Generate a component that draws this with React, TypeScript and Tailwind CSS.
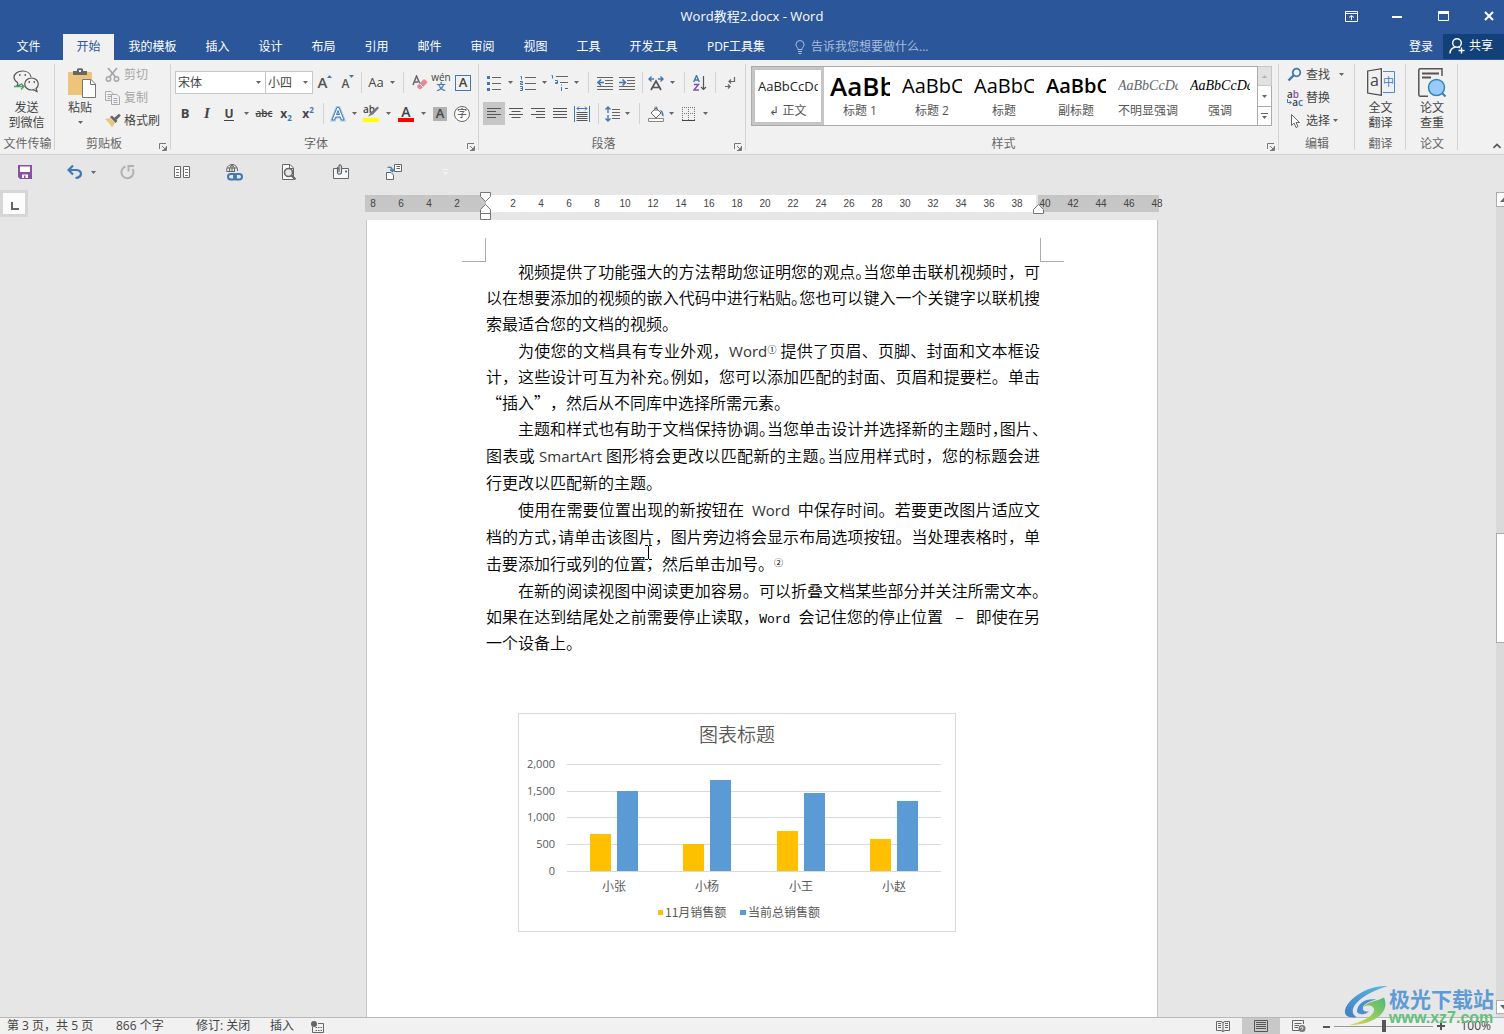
import type { ReactNode } from "react";

const UI_FONT = "font-['Open_Sans','Noto_Sans_CJK_SC',sans-serif]";

/* ---------- small shared pieces ---------- */

const Icon = ({ w = 16, h = 16, children }: { w?: number; h?: number; children: ReactNode }) => (
  <svg width={w} height={h} viewBox={`0 0 ${w} ${h}`} fill="none" className="shrink-0" aria-hidden="true">
    {children}
  </svg>
);

const Caret = () => (
  <Icon w={5} h={3}>
    <path d="M0 0H5L2.500 3Z" fill="#666" />
  </Icon>
);

const Tool = ({ label, className = "w-[22px]", children }: { label: string; className?: string; children: ReactNode }) => (
  <button type="button" aria-label={label} className={`flex h-[23px] shrink-0 items-center justify-center ${className}`}>
    {children}
  </button>
);

const Sep = ({ className = "w-2" }: { className?: string }) => (
  <div className={`flex h-[21px] shrink-0 justify-center ${className}`}>
    <div className="w-px bg-[#d2d2d2]" />
  </div>
);

const Launcher = () => (
  <button type="button" aria-label="更多选项" className="absolute right-[4px] bottom-[3px]">
    <Icon w={8} h={8}>
      <path d="M.5 6V.5H7M3 3L6 6M7.5 3V7.5H3" stroke="#777" />
      <path d="M7 4V7H4Z" fill="#777" />
    </Icon>
  </button>
);

const Group = ({ title, className, launcher, children }: { title: string; className: string; launcher?: boolean; children: ReactNode }) => (
  <section aria-label={title} className={`relative flex shrink-0 flex-col ${className}`}>
    <div className="h-[75px]">{children}</div>
    <div className="text-center text-xs leading-[18px] text-[#666]">{title}</div>
    {launcher && <Launcher />}
    <div className="absolute top-1 right-0 h-[86px] w-px bg-[#d2d2d2]" />
  </section>
);

/* ---------- title bar and tabs ---------- */

const TitleBar = () => (
  <div className="grid h-[34px] grid-cols-[1fr_auto_1fr] items-center overflow-hidden">
    <div />
    <h1 className="text-[13px] text-white">Word教程2.docx - Word</h1>
    <div className="-mr-2 flex justify-end pb-[2px]">
      <Tool label="功能区显示选项" className="w-[46px]">
        <Icon w={13} h={11}>
          <path d="M.5 .5H12.500V10.500H.5ZM.5 2.500H12.500M6.500 9V5M4 6.500L6.500 4.500L9 6.500" stroke="#fff" />
        </Icon>
      </Tool>
      <Tool label="最小化" className="w-[46px]">
        <Icon w={10} h={4}>
          <path d="M0 3H10" stroke="#fff" strokeWidth="2" />
        </Icon>
      </Tool>
      <Tool label="最大化" className="w-[46px]">
        <Icon w={11} h={10}>
          <path d="M.5 .5H10.5V9.500H.5Z" stroke="#fff" />
          <path d="M0 1.5H11" stroke="#fff" strokeWidth="3" />
        </Icon>
      </Tool>
      <Tool label="关闭" className="w-[46px]">
        <Icon w={10} h={10}>
          <path d="M1 1L9 9M9 1L1 9" stroke="#fff" strokeWidth="2" />
        </Icon>
      </Tool>
    </div>
  </div>
);

const tabs = [
  { name: "文件", cls: "w-[57px] mr-[6px]" },
  { name: "开始", cls: "w-[51px] bg-[#f1f1f1] text-[#2b579a]" },
  { name: "我的模板", cls: "w-[77px]" },
  { name: "插入", cls: "w-[53px]" },
  { name: "设计", cls: "w-[53px]" },
  { name: "布局", cls: "w-[53px]" },
  { name: "引用", cls: "w-[53px]" },
  { name: "邮件", cls: "w-[53px]" },
  { name: "审阅", cls: "w-[53px]" },
  { name: "视图", cls: "w-[53px]" },
  { name: "工具", cls: "w-[53px]" },
  { name: "开发工具", cls: "w-[77px]" },
  { name: "PDF工具集", cls: "w-[88px]" },
];

const TabBar = () => (
  <nav className="flex h-[26px] text-xs text-white">
    {tabs.map((t) => (
      <button key={t.name} type="button" className={`shrink-0 pb-px text-center whitespace-nowrap ${t.cls}`}>
        {t.name}
      </button>
    ))}
    <label className="ml-[15px] flex items-center gap-[6px]">
      <Icon w={10} h={14}>
        <path d="M3 9.500C3 7.500 1 7 1 4.500A4 4 0 0 1 9 4.500C9 7 7 7.500 7 9.500ZM3 11.500H7M3.500 13.500H6.500" stroke="#a9bcd8" />
      </Icon>
      <input
        type="text"
        aria-label="操作说明搜索"
        placeholder="告诉我您想要做什么..."
        className="w-[160px] bg-transparent outline-none placeholder:text-[#a9bcd8]"
      />
    </label>
    <button type="button" className="ml-auto px-[10px] pb-px">
      登录
    </button>
    <button type="button" className="mb-px flex w-[61px] items-center gap-1 bg-[#124078] pb-[2px] pl-[6px]">
      <Icon>
        <circle cx="8" cy="5" r="4.300" stroke="#fff" strokeWidth="1.400" />
        <path d="M1 15.500C1 11 4 9.500 6.500 9M9.500 9L11 10M12.500 9.500V15.500M9.500 12.500H15.500" stroke="#fff" strokeWidth="1.400" />
      </Icon>
      共享
    </button>
  </nav>
);

/* ---------- ribbon groups ---------- */

const WechatGroup = () => (
  <Group title="文件传输" className="w-[55px]">
    <button type="button" className="flex w-[53px] flex-col items-center pt-[10px] text-xs leading-[15px]">
      <Icon w={28} h={24}>
        <path d="M5 13C2 11 1 9 1 7.500C1 3.500 5 1 9.500 1C14 1 17.500 3.500 18 7M5 13L4 16L8 14.500" stroke="#555" strokeWidth="1.200" />
        <ellipse cx="18.500" cy="14" rx="6.800" ry="6" fill="#f1f1f1" stroke="#555" strokeWidth="1.200" />
        <path d="M20 19.500L24 21.500L23 18" fill="#f1f1f1" stroke="#555" strokeWidth="1.200" />
        <path d="M6 5H7.500M11.500 5H13M15.500 12H17M20.500 12H22" stroke="#444" strokeWidth="1.600" />
        <path d="M1 16.500H11M8 13.500L11 16.500L8 19.500" stroke="#4aa564" strokeWidth="1.400" />
      </Icon>
      <span className="mt-[6px]">发送</span>
      <span>到微信</span>
    </button>
  </Group>
);

const ClipboardGroup = () => (
  <Group title="剪贴板" className="w-[116px] [&>div:nth-child(2)]:pr-[18px]" launcher>
    <div className="flex text-xs">
      <button type="button" className="flex w-[50px] flex-col items-center pt-2 leading-[15px]">
        <span className="ml-1">
          <Icon w={28} h={30}>
            <path d="M0 4H24V27H0Z" fill="#ecc47b" />
            <path d="M5 3H9V1C9 0 15 0 15 1V3H19V7H5Z" fill="#666" />
            <path d="M11 2H13V4H11Z" fill="#f1f1f1" />
            <path d="M14.500 11.500H23L27.500 16V29.500H14.500Z" fill="#fff" stroke="#777" />
            <path d="M22.500 11.500V16.500H27.500" stroke="#777" />
          </Icon>
        </span>
        <span className="mt-[2px]">粘贴</span>
        <span className="mt-[6px]">
          <Caret />
        </span>
      </button>
      <div className="flex flex-col pt-[3px]">
        <button type="button" className="flex h-[23px] items-center gap-[3px] text-[#a6a6a6]">
          <Icon>
            <path d="M3 1L10.500 10M12 1L4.500 10" stroke="#a6a6a6" strokeWidth="1.800" />
            <circle cx="3.500" cy="12" r="2.200" stroke="#a6a6a6" strokeWidth="1.500" />
            <circle cx="11.500" cy="12" r="2.200" stroke="#a6a6a6" strokeWidth="1.500" />
          </Icon>
          剪切
        </button>
        <button type="button" className="flex h-[23px] items-center gap-[3px] text-[#a6a6a6]">
          <Icon>
            <path d="M.5 1.500H6L8.500 4V10.500H.5ZM2.500 4.500H6M2.500 6.500H6M2.500 8.500H5" stroke="#a8a8b0" />
            <path d="M6.500 4.500H12L14.500 7V14.500H6.500Z" fill="#f1f1f1" stroke="#a8a8b0" />
            <path d="M8.500 8.500H12.500M8.500 10.500H12.500M8.500 12.500H12.500" stroke="#a8a8b0" />
          </Icon>
          复制
        </button>
        <button type="button" className="flex h-[23px] items-center gap-[3px]">
          <Icon>
            <path d="M0 6L5 5L10 10L7 14.500C5 11 3 9 0 6Z" fill="#ecc47b" />
            <path d="M5 4L7 2.500L12.500 8L10.500 10Z" fill="#666" />
            <path d="M9 5L14 .8L15.800 2.500L11.500 7Z" fill="#666" />
          </Icon>
          格式刷
        </button>
      </div>
    </div>
  </Group>
);

const SelectBox = ({ label, value, options, className }: { label: string; value: string; options: string[]; className: string }) => (
  <div className={`grid h-[23px] shrink-0 items-center border border-[#c6c6c6] bg-white ${className}`}>
    <select aria-label={label} defaultValue={value} className="col-start-1 row-start-1 h-full w-full appearance-none pl-[2px] text-xs outline-none">
      {options.map((o) => (
        <option key={o}>{o}</option>
      ))}
    </select>
    <span className="pointer-events-none col-start-1 row-start-1 mr-1 justify-self-end">
      <Caret />
    </span>
  </div>
);

const FontGroup = () => (
  <Group title="字体" className="w-[308px] [&>div:nth-child(2)]:pr-[18px]" launcher>
    <div className="flex flex-col gap-2 pt-[11px] pl-1">
      <div className="flex items-center">
        <SelectBox label="字体" value="宋体" options={["宋体", "黑体", "楷体"]} className="w-[91px]" />
        <SelectBox label="字号" value="小四" options={["小四", "四号", "五号"]} className="-ml-px w-[48px]" />
        <Tool label="增大字号" className="w-6">
          <span className="text-[15px] font-semibold text-[#555]">A</span>
          <span className="mb-3">
            <Icon w={5} h={3}>
              <path d="M0 3H5L2.500 0Z" fill="#3f78b5" />
            </Icon>
          </span>
        </Tool>
        <Tool label="减小字号">
          <span className="mt-[3px] text-[12px] font-semibold text-[#555]">A</span>
          <span className="mb-3">
            <Icon w={5} h={3}>
              <path d="M0 0H5L2.500 3Z" fill="#3f78b5" />
            </Icon>
          </span>
        </Tool>
        <Sep className="w-1" />
        <Tool label="更改大小写" className="w-[26px]">
          <span className="text-[13px] text-[#444]">Aa</span>
        </Tool>
        <Tool label="大小写选项" className="w-[6px]">
          <Caret />
        </Tool>
        <Sep className="w-4" />
        <Tool label="清除格式" className="w-[18px]">
          <Icon>
            <path d="M1 10L4.500 1L8 9M2 7H6" stroke="#666" strokeWidth="1.500" />
            <path d="M5.500 10.500L11.500 4.500Q12.500 4 13.500 5L15 6.500Q15.500 7.500 15 8L9 14Q8 14.500 7 14L5.500 12.500Q5 11.500 5.500 10.500Z" fill="#e8879a" />
            <path d="M7.500 8.500L11.500 12.500" stroke="#f1f1f1" />
          </Icon>
        </Tool>
        <Tool label="拼音指南" className="w-6 flex-col pb-px">
          <span className="text-[10px] leading-[8px] text-[#444]">wén</span>
          <span className="text-[9px] leading-[11px] font-bold text-[#3f78b5]">文</span>
        </Tool>
        <Tool label="字符边框" className="w-5">
          <span className="flex size-4 items-center justify-center border border-[#3f78b5] text-[13px] font-semibold text-[#444]">A</span>
        </Tool>
      </div>
      <div className="-ml-px flex items-center text-[13px] text-[#444]">
        <Tool label="加粗">
          <b>B</b>
        </Tool>
        <Tool label="倾斜">
          <i className="font-['Liberation_Serif',serif] text-[15px] font-bold">I</i>
        </Tool>
        <Tool label="下划线">
          <span className="border-b border-[#444] text-[12px] leading-[13px] font-bold">U</span>
        </Tool>
        <Tool label="下划线选项" className="w-[13px]">
          <Caret />
        </Tool>
        <Tool label="删除线">
          <s className="text-[10px] font-semibold">abc</s>
        </Tool>
        <Tool label="下标">
          <b className="text-xs">x</b>
          <span className="mt-2 text-[8px] font-bold text-[#3f78b5]">2</span>
        </Tool>
        <Tool label="上标">
          <b className="text-xs">x</b>
          <span className="mb-2 text-[8px] font-bold text-[#3f78b5]">2</span>
        </Tool>
        <Sep />
        <Tool label="文本效果">
          <Icon>
            <path d="M2 14L7 1.500H9L14 14H11.500L10.300 11H5.700L4.500 14ZM6.500 8.500H9.500L8 4.500Z" fill="#fff" stroke="#a9cbeb" strokeWidth="3" />
            <path d="M2 14L7 1.500H9L14 14H11.500L10.300 11H5.700L4.500 14ZM6.500 8.500H9.500L8 4.500Z" fill="#fff" stroke="#3f78b5" />
          </Icon>
        </Tool>
        <Tool label="文本效果选项" className="w-[10px]">
          <Caret />
        </Tool>
        <Tool label="突出显示" className="w-6">
          <span className="grid">
            <span className="col-start-1 row-start-1 text-left text-[10px] leading-[9px] font-semibold">ab</span>
            <span className="col-start-1 row-start-1">
              <Icon w={16} h={17}>
                <path d="M0 13H16V17H0Z" fill="#ff0" />
                <path d="M5 11.500L8 7L14.500 1.500L16 3L10 9.500Z" fill="#777" />
              </Icon>
            </span>
          </span>
        </Tool>
        <Tool label="突出显示颜色" className="w-[10px]">
          <Caret />
        </Tool>
        <Tool label="字体颜色" className="w-[26px] flex-col">
          <span className="text-[14px] leading-[13px] font-semibold">A</span>
          <span className="h-1 w-4 bg-[#f00]" />
        </Tool>
        <Tool label="字体颜色选项" className="w-2">
          <Caret />
        </Tool>
        <Tool label="字符底纹" className="w-[26px]">
          <span className="flex h-[14px] w-[14px] items-center justify-center bg-[#b1b1b1] font-semibold">A</span>
        </Tool>
        <Tool label="带圈字符" className="w-[18px]">
          <span className="flex size-4 shrink-0 items-center justify-center rounded-full border border-[#666] bg-white text-[10px]">字</span>
        </Tool>
      </div>
    </div>
  </Group>
);

const Lines = ({ d }: { d: string }) => (
  <Icon>
    <path d={d} stroke="#555" />
  </Icon>
);

const ParagraphGroup = () => (
  <Group title="段落" className="w-[267px] [&>div:nth-child(2)]:pr-[18px]" launcher>
    <div className="flex flex-col gap-2 pt-[11px] pl-1">
      <div className="flex items-center pb-px">
        <Tool label="项目符号">
          <Icon w={14} h={16}>
            <path d="M5 2.500H14M5 8.500H14M5 14.500H14" stroke="#666" />
            <path d="M0 1H3V4H0ZM0 7H3V10H0ZM0 13H3V16H0Z" fill="#3f78b5" />
          </Icon>
        </Tool>
        <Tool label="项目符号库" className="w-[10px]">
          <Caret />
        </Tool>
        <Tool label="编号" className="w-[26px]">
          <Icon>
            <path d="M5 2.500H16M5 8.500H16M5 14.500H16" stroke="#666" />
            <path d="M.5 1.500H1.500V4.500M0 6.500H2.500V8H.5V9.500H3M0 11.500H2.500V15.500H0M.5 13.500H2.500" stroke="#3f78b5" />
          </Icon>
        </Tool>
        <Tool label="编号库" className="w-[6px]">
          <Caret />
        </Tool>
        <Tool label="多级列表" className="w-[26px]">
          <Icon w={18} h={16}>
            <path d="M5 1.500H17M9 7.500H17M14 13.500H17" stroke="#666" />
            <path d="M.5 .5H1.500V3.500M4 5.500H6.500V8.500H4.500V7.500H6M10.500 9.500V10.500M10.500 12V16" stroke="#3f78b5" />
          </Icon>
        </Tool>
        <Tool label="列表库" className="w-[6px]">
          <Caret />
        </Tool>
        <Sep className="w-[18px]" />
        <Tool label="减少缩进量" className="w-4">
          <Icon>
            <path d="M0 2.500H16M8 5.500H16M8 8.500H16M0 11.500H16M0 14.500H16" stroke="#666" />
            <path d="M7 7.500H1M4 4.500L1 7.500L4 10.500" stroke="#3f78b5" strokeWidth="1.600" />
          </Icon>
        </Tool>
        <Tool label="增加缩进量" className="w-7">
          <Icon>
            <path d="M0 2.500H16M8 5.500H16M8 8.500H16M0 11.500H16M0 14.500H16" stroke="#666" />
            <path d="M0 7.500H6M3.500 4.500L6.500 7.500L3.500 10.500" stroke="#3f78b5" strokeWidth="1.600" />
          </Icon>
        </Tool>
        <Sep className="w-[2px]" />
        <Tool label="中文版式" className="w-[26px]">
          <Icon>
            <path d="M3 15L8 6L13 15M5 12.500H11" stroke="#555" strokeWidth="1.700" />
            <path d="M6 4H1M3.500 1.500L1 4L3.500 6.500M10 4H15M12.500 1.500L15 4L12.500 6.500" stroke="#3f78b5" strokeWidth="1.400" />
          </Icon>
        </Tool>
        <Tool label="中文版式选项" className="w-[6px]">
          <Caret />
        </Tool>
        <Sep className="w-[18px]" />
        <Tool label="排序" className="w-[14px]">
          <Icon w={14} h={16}>
            <path d="M.7 7L3.500 .5L6.300 7M1.500 5H5.500" stroke="#3f78b5" strokeWidth="1.400" />
            <path d="M1 9.500H5.500L1 15H6" stroke="#8a4fa8" strokeWidth="1.400" />
            <path d="M10.500 1V14.500M8 12L10.500 14.500L13 12" stroke="#555" strokeWidth="1.200" />
          </Icon>
        </Tool>
        <Sep className="w-4" />
        <Tool label="显示编辑标记" className="w-[14px]">
          <Icon w={12} h={14}>
            <path d="M10.500 1V5.500H5M7 3.500L5 5.500L7 7.500M1 10.500H6M4 8.500L6 10.500L4 12.500" stroke="#666" strokeWidth="1.200" />
          </Icon>
        </Tool>
      </div>
      <div className="-mt-px flex items-center">
        <Tool label="左对齐" className="w-[22px] bg-[#c6c6c6]">
          <Lines d="M1 2.500H15M1 5.500H10M1 8.500H15M1 11.500H10" />
        </Tool>
        <Tool label="居中">
          <Lines d="M1 2.500H15M3.500 5.500H12.500M1 8.500H15M3.500 11.500H12.500" />
        </Tool>
        <Tool label="右对齐">
          <Lines d="M1 2.500H15M6 5.500H15M1 8.500H15M6 11.500H15" />
        </Tool>
        <Tool label="两端对齐">
          <Lines d="M1 2.500H15M1 5.500H15M1 8.500H15M1 11.500H15" />
        </Tool>
        <Tool label="分散对齐">
          <Icon>
            <path d="M.5 0V16M15.500 0V16M3 2.500H13M5 .5L3 2.500L5 4.500M11 .5L13 2.500L11 4.500" stroke="#3f78b5" />
            <path d="M2.500 6.500H13.500M2.500 8.500H13.500M2.500 10.500H13.500M2.500 12.500H13.500M2.500 14.500H13.500" stroke="#555" />
          </Icon>
        </Tool>
        <Sep className="w-[10px]" />
        <Tool label="行距" className="w-5">
          <Icon>
            <path d="M7 3.500H15M7 6.500H15M7 9.500H15M7 12.500H15" stroke="#666" />
            <path d="M3 1V7M3 9V15M.5 3.500L3 1L5.500 3.500M.5 12.500L3 15L5.500 12.500" stroke="#3f78b5" strokeWidth="1.400" />
          </Icon>
        </Tool>
        <Tool label="行距选项" className="w-2">
          <Caret />
        </Tool>
        <Sep className="w-4" />
        <Tool label="底纹" className="w-[18px]">
          <Icon w={17} h={16}>
            <path d="M3 7L8 2L13 7L8 12ZM7 5V1.500Q7.500 0 9 1.500V5" fill="#fff" stroke="#666" />
            <path d="M11.500 4Q16 4 15.500 11Q13 9 13.500 6.500Z" fill="#3f78b5" />
            <path d="M.5 12.500H15.500V15.500H.5Z" fill="#fff" stroke="#888" />
          </Icon>
        </Tool>
        <Tool label="底纹颜色" className="w-3">
          <Caret />
        </Tool>
        <Tool label="边框" className="w-6">
          <Icon w={14} h={14}>
            <path d="M.5 0V13M6.500 0V13M12.500 0V13M0 .5H13M0 6.500H13" stroke="#777" strokeDasharray="1 1" />
            <path d="M0 13.500H13" stroke="#444" />
          </Icon>
        </Tool>
        <Tool label="边框选项" className="w-2">
          <Caret />
        </Tool>
      </div>
    </div>
  </Group>
);

const styleItems = [
  { name: "↲ 正文", sample: "AaBbCcDd", cls: "text-[13px] text-[#222]", box: "border-[#c6c6c6]" },
  { name: "标题 1", sample: "AaBb", cls: "text-[26px] font-semibold text-black", box: "border-transparent" },
  { name: "标题 2", sample: "AaBbCc", cls: "text-[20px] text-black", box: "border-transparent" },
  { name: "标题", sample: "AaBbCc", cls: "text-[20px] text-black", box: "border-transparent" },
  { name: "副标题", sample: "AaBbCc", cls: "text-[20px] font-semibold text-black", box: "border-transparent" },
  { name: "不明显强调", sample: "AaBbCcDd", cls: "font-['Liberation_Serif',serif] text-sm italic text-[#666]", box: "border-transparent" },
  { name: "强调", sample: "AaBbCcDd", cls: "font-['Liberation_Serif',serif] text-sm italic text-black", box: "border-transparent" },
];

const StylesGroup = () => (
  <Group title="样式" className="w-[533px] [&>div:nth-child(2)]:pr-[18px]" launcher>
    <div className="flex pt-[6px] pl-[5px]">
      <div className="flex h-[60px] w-[507px] border border-[#ababab] bg-white">
        {styleItems.map((s) => (
          <button key={s.name} type="button" className={`flex w-[72px] shrink-0 flex-col items-center border-[3px] ${s.box}`}>
            <span className={`h-[30px] w-[60px] overflow-hidden text-left leading-[32px] whitespace-nowrap ${s.cls}`}>{s.sample}</span>
            <span className="text-xs leading-[23px] whitespace-nowrap text-[#555]">{s.name}</span>
          </button>
        ))}
      </div>
      <div className="flex w-[14px] flex-col">
        <button type="button" aria-label="上一行" className="flex h-5 items-center justify-center border border-l-0 border-[#c6c6c6] bg-[#e1e1e1]">
          <Icon w={5} h={3}>
            <path d="M0 3H5L2.500 0Z" fill="#b0b0b0" />
          </Icon>
        </button>
        <button type="button" aria-label="下一行" className="flex h-5 items-center justify-center border-r border-[#ababab] bg-white">
          <Caret />
        </button>
        <button type="button" aria-label="其他样式" className="flex h-5 items-center justify-center border border-l-0 border-[#ababab] bg-white">
          <Icon w={7} h={7}>
            <path d="M0 .5H7" stroke="#666" />
            <path d="M1 3H6L3.500 6Z" fill="#666" />
          </Icon>
        </button>
      </div>
    </div>
  </Group>
);

const EditGroup = () => (
  <Group title="编辑" className="w-[76px]">
    <div className="flex flex-col pt-[3px] pl-2 text-xs">
      <button type="button" className="flex h-[23px] items-center gap-[3px]">
        <Icon>
          <circle cx="9.500" cy="5.500" r="3.800" stroke="#3f78b5" strokeWidth="1.800" />
          <path d="M6.500 8.500L1.500 13.500" stroke="#3f78b5" strokeWidth="2.400" />
        </Icon>
        查找
        <span className="ml-[6px]">
          <Caret />
        </span>
      </button>
      <button type="button" className="flex h-[23px] items-center gap-[3px]">
        <span className="w-4 text-[10px] leading-[8px] font-semibold">
          <span className="block text-left">
            a<span className="text-[#8a4fa8]">b</span>
          </span>
          <span className="flex items-center justify-end">
            <Icon w={5} h={6}>
              <path d="M.5 0V3.500H4M2.500 2L4.500 3.500L2.500 5" stroke="#3f78b5" />
            </Icon>
            a<span className="text-[#3f78b5]">c</span>
          </span>
        </span>
        替换
      </button>
      <button type="button" className="flex h-[23px] items-center gap-[3px]">
        <Icon>
          <path d="M4.500 1.500V12.500L7 10L9 14.500L11 13.500L9 9.500H12.500Z" fill="#fff" stroke="#666" />
        </Icon>
        选择
        <Caret />
      </button>
    </div>
  </Group>
);

const TranslateGroup = () => (
  <Group title="翻译" className="w-[51px]">
    <button type="button" className="flex w-full flex-col items-center pt-2 text-xs leading-[15px]">
      <Icon w={28} h={28}>
        <path d="M.7 3L14.300 .7V27.300L.7 25Z" stroke="#444" strokeWidth="1.200" />
        <path d="M16 3.500H27.500V24.500H16" stroke="#4a8ad8" />
        <text x="16" y="18" fontSize="11" fill="#3b7fd4">
          中
        </text>
        <text x="3" y="18" fontSize="16" fill="#444">
          a
        </text>
      </Icon>
      <span className="mt-1">全文</span>
      <span>翻译</span>
    </button>
  </Group>
);

const PaperGroup = () => (
  <Group title="论文" className="w-[52px]">
    <button type="button" className="flex w-full flex-col items-center pt-2 text-xs leading-[15px]">
      <Icon w={28} h={30}>
        <path d="M24 8V.8H2Q.8 .8 .8 2V26.500Q.8 28.200 2 28.200H10" stroke="#555" strokeWidth="1.500" />
        <path d="M4 5.500H21M4 9.500H13" stroke="#555" strokeWidth="2" />
        <circle cx="18.500" cy="19.500" r="8" fill="#99cbfa" stroke="#2f86b5" strokeWidth="1.500" />
        <path d="M24 25L27.500 28.500" stroke="#2f86b5" strokeWidth="2" />
      </Icon>
      <span className="mt-[2px]">论文</span>
      <span>查重</span>
    </button>
  </Group>
);

const Ribbon = () => (
  <div className="flex h-[95px] overflow-hidden border-b border-[#d2d2d2] bg-[#f1f1f1] text-[#444]">
    <WechatGroup />
    <ClipboardGroup />
    <FontGroup />
    <ParagraphGroup />
    <StylesGroup />
    <EditGroup />
    <TranslateGroup />
    <PaperGroup />
    <button type="button" aria-label="折叠功能区" className="mt-auto mr-[3px] mb-1 ml-auto">
      <Icon w={8} h={8}>
        <path d="M.5 6L4 2.500L7.500 6" stroke="#555" strokeWidth="1.600" />
      </Icon>
    </button>
  </div>
);

/* ---------- quick access bar ---------- */

const QuickAccess = () => (
  <div className="flex h-[35px] items-center pb-px pl-[14px]">
    <Tool label="保存">
      <Icon w={14} h={14}>
        <path d="M0 0H14V14H2L0 12Z" fill="#8a4fa8" />
        <path d="M2 1.500H12V7H2ZM4 9.500H10V13H7.500V10.500H6V13H4Z" fill="#fff" />
      </Icon>
    </Tool>
    <Tool label="撤消" className="ml-7 w-[22px]">
      <Icon>
        <path d="M1.500 6H9.500Q14 6.500 14 10Q13.500 13.500 8.500 14M6 1.500L1.500 6L6 10.500" stroke="#3f78b5" strokeWidth="2.200" />
      </Icon>
    </Tool>
    <Tool label="撤消选项" className="w-[14px]">
      <Caret />
    </Tool>
    <Tool label="恢复" className="ml-[15px] w-[26px]">
      <Icon>
        <path d="M5.500 2.500A6 6 0 1 0 12.500 5" stroke="#b1b1b1" strokeWidth="2" />
        <path d="M14 2H8.500V7.500" stroke="#b1b1b1" strokeWidth="2" />
      </Icon>
    </Tool>
    <Tool label="并排查看" className="ml-[29px] w-6">
      <Icon>
        <path d="M.5 2.500H6.500V13.500H.5ZM9.500 2.500H15.500V13.500H9.500Z" fill="#fff" stroke="#666" />
        <path d="M2 5.500H5M2 8.500H5M2 11.500H5M11 5.500H14M11 8.500H14M11 11.500H14" stroke="#777" />
      </Icon>
    </Tool>
    <Tool label="超链接" className="ml-7 w-6">
      <Icon w={17} h={17}>
        <path d="M1 8A5.500 5.500 0 1 1 11.500 7M6 .5V8M1 4H11M1 7.500H9M3.500 8Q2.500 4 6 .5Q9.500 4 8.500 7" stroke="#666" />
        <rect x="2" y="10" width="8" height="5.500" rx="2.700" stroke="#3f78b5" strokeWidth="2" />
        <rect x="8" y="10" width="8" height="5.500" rx="2.700" stroke="#3f78b5" strokeWidth="2" />
      </Icon>
    </Tool>
    <Tool label="打印预览" className="ml-[31px] w-6">
      <Icon>
        <path d="M1.500 .5H9L12.500 4V15.500H1.500Z" fill="#fff" stroke="#666" />
        <path d="M8.500 .5V4.500H12.500" stroke="#666" />
        <circle cx="7.500" cy="8.500" r="4" fill="#e6e6e6" stroke="#666" strokeWidth="1.600" />
        <path d="M10.500 11.500L14.500 15.500" stroke="#666" strokeWidth="2.200" />
      </Icon>
    </Tool>
    <Tool label="电子邮件" className="ml-[28px] w-6">
      <Icon>
        <path d="M.5 4.500H15.500V14.500H.5Z" fill="#f8f8f8" stroke="#666" />
        <path d="M12 6.500H14V8.500H12Z" fill="#3f78b5" />
        <path d="M4.500 3V9Q6 11.500 8.500 9V2.500Q7.500 0 6 1.500V8" fill="#e6e6e6" stroke="#666" strokeWidth="1.200" />
      </Icon>
    </Tool>
    <Tool label="发送文档" className="ml-[29px] w-6">
      <Icon>
        <path d="M8.500 .5H15.500V7.500H8.500ZM10.500 2.500H14M10.500 4.500H14" fill="#fff" stroke="#666" />
        <path d="M.5 8.500H5L7.500 11V15.500H.5Z" fill="#fff" stroke="#666" />
        <path d="M1.500 3.500Q6 2 6.500 7M4 5.500L6.500 7.500L8.500 5" stroke="#3f78b5" strokeWidth="1.300" />
      </Icon>
    </Tool>
    <Tool label="自定义快速访问工具栏" className="ml-[27px] w-6">
      <Icon w={7} h={7}>
        <path d="M1 .5H6" stroke="#f4f4f4" />
        <path d="M1 3H6L3.500 6Z" fill="#f4f4f4" />
      </Icon>
    </Tool>
  </div>
);

/* ---------- ruler ---------- */

const marks = [8, 6, 4, 2, 0, 2, 4, 6, 8, 10, 12, 14, 16, 18, 20, 22, 24, 26, 28, 30, 32, 34, 36, 38, 40, 42, 44, 46, 48];

const Ruler = () => (
  <div className="relative grid h-4 w-[794px] shrink-0 grid-cols-[100%]">
    <div className="col-start-1 row-start-1 flex">
      <div className="w-[121px] bg-[#c6c6c6]" />
      <div className="w-[550px] bg-white" />
      <div className="ml-[2px] grow bg-[#c6c6c6]" />
    </div>
    <div className="col-start-1 row-start-1 -ml-[6px] flex w-[812px] font-['Liberation_Sans',sans-serif] text-[10px] leading-[17px] text-[#444]">
      {marks.map((m, i) => (
        <span key={i} className="w-7 text-center">
          {m || ""}
        </span>
      ))}
    </div>
    <span className="absolute -top-[3px] left-[115px]">
      <Icon w={11} h={28}>
        <path d="M.5 .5H10.500V4.500L5.500 9.500L.5 4.500Z" fill="#fff" stroke="#777" />
        <path d="M.5 27.500V17.500L5.500 12.500L10.500 17.500V27.500ZM.5 21.500H10.500" fill="#fff" stroke="#777" />
      </Icon>
    </span>
    <span className="absolute top-[9px] left-[668px]">
      <Icon w={11} h={10}>
        <path d="M.5 9.500V5.500L5.500 .5L10.500 5.500V9.500Z" fill="#fff" stroke="#777" />
      </Icon>
    </span>
  </div>
);

/* ---------- document ---------- */

// half-width punctuation mark
const Half = ({ children }: { children: string }) => <span className="[font-feature-settings:'halt']">{children}</span>;

const Latin = ({ children }: { children: string }) => (
  <span className="font-['Open_Sans',sans-serif] text-[15px] leading-none font-normal text-[#333]">{children}</span>
);

const Note = ({ children }: { children: string }) => <sup className="text-[9px] leading-none font-normal">{children}</sup>;

const Full = ({ indent, children }: { indent?: boolean; children: ReactNode }) => (
  <span className={`block whitespace-nowrap [text-align-last:justify] ${indent ? "pl-8" : ""}`}>{children}</span>
);

const DocText = () => (
  <div className="relative font-['Noto_Sans_CJK_SC',sans-serif] text-base font-[350] text-black [text-spacing-trim:space-all]">
    <p className="leading-[26px]">
      <Full indent>
        视频提供了功能强大的方法帮助您证明您的观点<Half>。</Half>当您单击联机视频时，可
      </Full>
      <Full>
        以在想要添加的视频的嵌入代码中进行粘贴<Half>。</Half>您也可以键入一个关键字以联机搜
      </Full>
      索最适合您的文档的视频。
    </p>
    <p className="pt-px leading-[26px]">
      <Full indent>
        为使您的文档具有专业外观，<Latin>Word</Latin>
        <Note>①</Note> 提供了页眉、页脚、封面和文本框设
      </Full>
      <Full>
        计，这些设计可互为补充<Half>。</Half>例如，您可以添加匹配的封面、页眉和提要栏。单击
      </Full>
      “插入”，然后从不同库中选择所需元素。
    </p>
    <p className="leading-[27px]">
      <Full indent>
        主题和样式也有助于文档保持协调<Half>。</Half>当您单击设计并选择新的主题时<Half>，</Half>图片<Half>、</Half>
      </Full>
      <Full>
        图表或 <Latin>SmartArt</Latin> 图形将会更改以匹配新的主题<Half>。</Half>当应用样式时，您的标题会进
      </Full>
      行更改以匹配新的主题。
    </p>
    <p className="leading-[27px]">
      <Full indent>
        使用在需要位置出现的新按钮在{" "}
        <span className="mx-1">
          <Latin>Word</Latin>
        </span>{" "}
        中保存时间。若要更改图片适应文
      </Full>
      <Full>
        档的方式<Half>，</Half>请单击该图片，图片旁边将会显示布局选项按钮。当处理表格时，单
      </Full>
      击要添加行或列的位置，然后单击加号。<Note>②</Note>
    </p>
    <p className="leading-[26px]">
      <Full indent>
        在新的阅读视图中阅读更加容易。可以折叠文档某些部分并关注所需文本<Half>。</Half>
      </Full>
      <Full>
        如果在达到结尾处之前需要停止读取，
        <span className="mr-2 font-['Liberation_Mono',monospace] text-[13px] leading-none font-normal">Word</span>会记住您的停止位置
        <span className="mx-3">–</span>即使在另
      </Full>
      一个设备上。
    </p>
    <span className="absolute top-[287px] left-[159px]">
      <Icon w={7} h={15}>
        <path d="M0 .5H3M4 .5H7M3.500 1V14M0 14.500H3M4 14.500H7" stroke="#000" />
      </Icon>
    </span>
  </div>
);

const chartData = [
  { name: "小张", nov: 700, total: 1500 },
  { name: "小杨", nov: 500, total: 1700 },
  { name: "小王", nov: 750, total: 1450 },
  { name: "小赵", nov: 600, total: 1300 },
];

const BASE = 158;
const barHeight = (v: number) => Math.round((v * 107) / 2000);

const Chart = () => (
  <svg
    width="438"
    height="219"
    viewBox="0 0 438 219"
    role="img"
    aria-label="图表标题"
    className="block bg-white font-['Noto_Sans_CJK_SC',sans-serif] text-xs"
    fill="#595959"
  >
    <rect x="0.5" y="0.5" width="437" height="218" fill="none" stroke="#d9d9d9" />
    <text x="219" y="29" textAnchor="middle" fontSize="19" className="font-[350]">
      图表标题
    </text>
    {[0, 500, 1000, 1500, 2000].map((v) => (
      <g key={v}>
        <path d={`M49 ${BASE - barHeight(v) + 0.5}H423`} stroke="#d9d9d9" />
        <text x="37" y={BASE - barHeight(v) + 4} textAnchor="end" fontSize="11" className="font-['Open_Sans',sans-serif]">
          {v.toLocaleString("en-US")}
        </text>
      </g>
    ))}
    {chartData.map((d, i) => {
      const x = 72 + Math.round(i * 93.4);
      return (
        <g key={d.name}>
          <rect x={x} y={BASE - barHeight(d.nov)} width="21" height={barHeight(d.nov)} fill="#ffc000" />
          <rect x={x + 27} y={BASE - barHeight(d.total)} width="21" height={barHeight(d.total)} fill="#5b9bd5" />
          <text x={x + 24} y="178" textAnchor="middle">
            {d.name}
          </text>
        </g>
      );
    })}
    <rect x="140" y="197" width="5" height="5" fill="#ffc000" />
    <text x="147" y="204">
      11月销售额
    </text>
    <rect x="222" y="197" width="6" height="5" fill="#5b9bd5" />
    <text x="230" y="204">
      当前总销售额
    </text>
  </svg>
);

const Page = () => (
  <article className="mt-[9px] w-[792px] grow border-x border-[#c6c6c6] bg-white pt-[18px] pr-[93px] pl-[95px]">
    <div className="flex h-5 justify-between">
      <div className="h-6 w-6 border-r border-b border-[#ababab]" />
      <div className="h-6 w-6 border-b border-l border-[#ababab]" />
    </div>
    <div className="px-6">
      <DocText />
      <div className="pt-[58px] pl-8">
        <Chart />
      </div>
    </div>
  </article>
);

const ScrollBar = () => (
  <div className="flex w-2 shrink-0 flex-col overflow-hidden bg-[#dadada]">
    <div className="h-[2px] bg-[#e6e6e6]" />
    <button type="button" aria-label="向上滚动" className="flex h-[15px] w-[17px] items-center justify-center border border-[#ababab] bg-white">
      <Icon w={9} h={5}>
        <path d="M0 5H9L4.500 0Z" fill="#666" />
      </Icon>
    </button>
    <div className="h-[326px]" />
    <div className="h-[110px] w-[17px] shrink-0 border border-[#ababab] bg-white" />
    <button type="button" aria-label="向下滚动" className="mt-auto mb-[3px] flex h-[14px] w-[17px] items-center justify-center border border-[#ababab] bg-white">
      <Icon w={9} h={5}>
        <path d="M0 0H9L4.500 5Z" fill="#666" />
      </Icon>
    </button>
  </div>
);

const Workspace = () => (
  <main className="flex min-h-0 grow overflow-hidden">
    <div className="w-7 shrink-0">
      <button type="button" aria-label="制表符" className="flex h-[27px] w-7 items-center justify-center border-[3px] border-[#d6d6d6] bg-[#fcfcfc]">
        <span className="mt-1 ml-px size-2 border-b-2 border-l-2 border-[#666]" />
      </button>
    </div>
    <div className="flex min-w-0 grow flex-col items-center pt-[5px]">
      <Ruler />
      <Page />
    </div>
    <ScrollBar />
  </main>
);

/* ---------- status bar ---------- */

const StatusBar = () => (
  <footer className="flex h-[17px] shrink-0 items-center border-t border-[#b8b8b8] bg-[#f1f1f1] text-xs leading-[18px] text-[#444]">
    <span className="w-[116px] pl-[7px]">第 3 页，共 5 页</span>
    <span className="w-20">866 个字</span>
    <span className="w-[74px]">修订: 关闭</span>
    <span className="w-[41px]">插入</span>
    <span className="mt-[2px]">
      <Icon w={14} h={12}>
        <path d="M1.500 6V11.500H12.500V2.500H7M4 6.500H11M4 9.500H11" stroke="#666" />
        <path d="M4 5V11M6.500 5V11M9 5V11" stroke="#f1f1f1" />
        <circle cx="3" cy="3" r="3" fill="#666" />
      </Icon>
    </span>
    <div className="ml-auto flex h-full items-center">
      <button type="button" aria-label="阅读视图" className="flex w-[38px] justify-center">
        <Icon w={14} h={12}>
          <path d="M.5 1.500H5L7 2.500L9 1.500H13.500V10.500H9L7 11.500L5 10.500H.5ZM7 2.500V11.500M2 3.500H5M2 5.500H5M2 7.500H5M9 3.500H12M9 5.500H12M9 7.500H12" stroke="#666" />
        </Icon>
      </button>
      <button type="button" aria-label="页面视图" className="flex h-full w-[38px] items-center justify-center bg-[#c8c8c8]">
        <Icon w={14} h={12}>
          <path d="M.5 .5H13.500V11.500H.5ZM2 2.500H12M2 4.500H12M2 6.500H12M2 8.500H12" stroke="#555" />
        </Icon>
      </button>
      <button type="button" aria-label="Web 版式视图" className="flex w-[38px] justify-center">
        <Icon w={14} h={12}>
          <path d="M7 10.500H.5V.5H11.500V4M2.500 3.500H9.500M2.500 5.500H7M2.500 7.500H6" stroke="#666" />
          <circle cx="10" cy="8.500" r="3.500" fill="#777" />
          <path d="M8 8Q10 6 11 7.500Q11 9 9.500 10" stroke="#f1f1f1" />
        </Icon>
      </button>
      <button type="button" aria-label="缩小" className="mr-1 ml-[5px]">
        <Icon w={7} h={8}>
          <path d="M0 5H7" stroke="#555" strokeWidth="2" />
        </Icon>
      </button>
      <input
        type="range"
        aria-label="显示比例"
        min="0"
        max="200"
        defaultValue="100"
        className="h-3 w-[99px] appearance-none bg-[linear-gradient(#999,#999)] bg-[length:100%_1px] bg-center bg-no-repeat [&::-webkit-slider-thumb]:h-3 [&::-webkit-slider-thumb]:w-1 [&::-webkit-slider-thumb]:appearance-none [&::-webkit-slider-thumb]:bg-[#555]"
      />
      <button type="button" aria-label="放大" className="ml-1">
        <Icon w={8} h={8}>
          <path d="M0 4H8M4 0V8" stroke="#555" strokeWidth="2" />
        </Icon>
      </button>
      <span className="w-[59px] pr-[13px] text-right">100%</span>
    </div>
  </footer>
);

const SiteMark = () => (
  <div className="pointer-events-none absolute right-[10px] bottom-2 flex items-end gap-px">
    <svg width="43" height="40" viewBox="0 0 130 120" aria-hidden="true">
      <defs>
        <linearGradient id="swoosh" x1="0" y1="1" x2="1" y2="0">
          <stop offset="0" stopColor="#3f7fc4" />
          <stop offset="1" stopColor="#5cb8ea" />
        </linearGradient>
        <linearGradient id="leaf" x1="0" y1="1" x2="1" y2="0">
          <stop offset="0" stopColor="#d9dc4a" />
          <stop offset="1" stopColor="#4cb87a" />
        </linearGradient>
      </defs>
      <path d="M128 0C66 -4 2 44 0 76C-1 92 14 96 36 94C22 88 18 72 32 54C54 28 88 12 128 0Z" fill="url(#swoosh)" />
      <path d="M36 76C38 50 64 36 94 40C74 46 54 54 54 66C54 76 64 80 72 74C68 86 38 90 36 76Z" fill="#4a90d0" />
      <path d="M118 34C136 72 100 116 12 118C50 108 86 92 88 72C88 60 72 54 56 62C66 46 96 46 118 34Z" fill="url(#leaf)" />
    </svg>
    <div className="whitespace-nowrap">
      <div className="font-['Noto_Sans_CJK_SC',sans-serif] text-[21px] leading-[22px] font-bold text-[#5f9bd6]">极光下载站</div>
      <div className="font-['Liberation_Sans',sans-serif] text-base leading-[17px] font-bold text-[#62c07c]">www.xz7.com</div>
    </div>
  </div>
);

const App = () => {
  return (
    <div className={`relative flex h-screen flex-col overflow-hidden bg-[#e6e6e6] ${UI_FONT}`} lang="zh-CN">
      <header className="shrink-0">
        <div className="bg-[#2b579a]">
          <TitleBar />
          <TabBar />
        </div>
        <Ribbon />
        <QuickAccess />
      </header>
      <Workspace />
      <StatusBar />
      <SiteMark />
    </div>
  );
};

export default App;
